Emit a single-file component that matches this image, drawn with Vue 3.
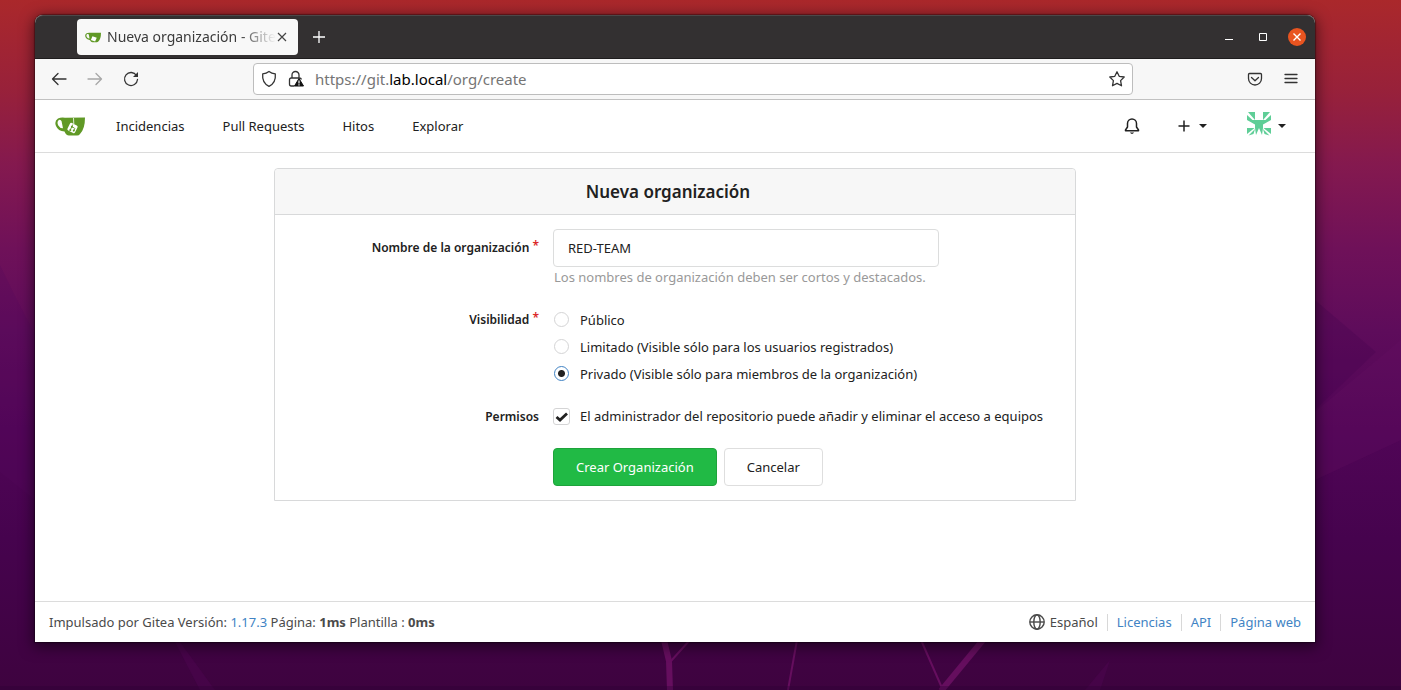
<script setup>
import { ref } from 'vue'

const navLinks = ['Incidencias', 'Pull Requests', 'Hitos', 'Explorar']
const footerLinks = ['Licencias', 'API', 'Página web']
const orgName = ref('RED-TEAM')
const visibility = ref('private')
const adminAccess = ref(true)
const visibilityOptions = [
  { value: 'public', label: 'Público' },
  { value: 'limited', label: 'Limitado (Visible sólo para los usuarios registrados)' },
  { value: 'private', label: 'Privado (Visible sólo para miembros de la organización)' },
]
</script>

<template>
  <div class="desktop">
    <svg class="wallpaper" viewBox="0 0 1401 690" preserveAspectRatio="none" aria-hidden="true">
      <path d="M0 265L14 294L35 335V500L0 472Z" fill="#52065a" opacity=".25" />
      <path d="M1315 300L1376 352L1315 410Z" fill="#450450" opacity=".3" />
      <path d="M1401 340L1315 412V480L1401 440Z" fill="#6b1065" opacity=".22" />
      <path d="M175 642L200 690H215L180 642ZM1110 660L1085 690H1100Z" fill="#5a0860" opacity=".25" />
      <g stroke="#650e5e" fill="none">
        <path d="M664 640L669 661L670 690" stroke-width="6" />
        <path d="M671 661L689 641M797 640L788 690M921 640L942 688" stroke-width="2" />
        <path d="M983 640L941 691" stroke-width="6" />
      </g>
      <path d="M0 688H1401" stroke="#2c0234" stroke-width="4" opacity=".35" />
    </svg>

    <div class="window">
      <header class="titlebar">
        <div class="tab">
          <svg class="favicon" viewBox="0 0 30 19" aria-hidden="true">
            <path d="M3 1.500Q6 0 10 .7L30 .5Q30 12 25 17Q24 18.500 22 18.500H14Q11 18.500 9.500 14.500Q3 14 1 9Q-1 4 3 1.500ZM4 3Q1.500 5 3.500 8.500Q5 11.500 8.500 11.500L7 3.500Q5 2.500 4 3Z" fill="#609926" fill-rule="evenodd" />
            <path d="M14 7L22 10L19 17L11 14Z" fill="#fff" />
          </svg>
          <span class="tab-title">Nueva organización - Gitea</span>
          <button class="plain tab-close" aria-label="Cerrar pestaña">
            <svg width="10" height="10" viewBox="0 0 10 10"><path d="M1 1L9 9M9 1L1 9" stroke="#444" stroke-width="1.200" /></svg>
          </button>
        </div>
        <button class="plain new-tab" aria-label="Nueva pestaña">
          <svg width="12" height="12" viewBox="0 0 12 12"><path d="M6 0V12M0 6H12" stroke="#fff" stroke-width="1.300" /></svg>
        </button>
        <div class="window-controls">
          <button class="plain" aria-label="Minimizar">
            <svg width="18" height="18" viewBox="0 0 18 18"><path d="M5 11.500H13" stroke="#fff" /></svg>
          </button>
          <button class="plain" aria-label="Maximizar">
            <svg width="18" height="18" viewBox="0 0 18 18"><path d="M5.500 5.500H12.500V12.500H5.500Z" stroke="#fff" fill="none" /></svg>
          </button>
          <button class="plain" aria-label="Cerrar">
            <svg width="18" height="18" viewBox="0 0 18 18"><circle cx="9" cy="9" r="9" fill="#e95420" /><path d="M5.500 5.500L12.500 12.500M12.500 5.500L5.500 12.500" stroke="#fff" stroke-width="1.400" /></svg>
          </button>
        </div>
      </header>

      <div class="toolbar">
        <div class="history">
          <button class="plain" aria-label="Atrás">
            <svg width="16" height="16" viewBox="0 0 16 16"><path d="M15 8H1.500M7 2.500L1.500 8L7 13.500" class="line" /></svg>
          </button>
          <button class="plain dim" aria-label="Adelante">
            <svg width="16" height="16" viewBox="0 0 16 16"><path d="M1 8H14.500M9 2.500L14.500 8L9 13.500" class="line" /></svg>
          </button>
          <button class="plain" aria-label="Recargar">
            <svg width="16" height="16" viewBox="0 0 16 16"><path d="M13.500 4.500A6.500 6.500 0 1 0 14.500 8.500" class="line" /><path d="M15 1V6H10Z" fill="#333" /></svg>
          </button>
        </div>
        <div class="address">
          <svg width="16" height="18" viewBox="0 0 16 18" aria-hidden="true"><path d="M8 1.500C6 3 4 3.600 1.700 3.900C1.200 9 3 14 8 16.300C13 14 14.800 9 14.300 3.900C12 3.600 10 3 8 1.500Z" class="line" /></svg>
          <svg width="16" height="18" viewBox="0 0 16 18" aria-hidden="true"><path d="M4 8V5A3.500 3.500 0 0 1 11 5V8M6 16H3.200Q1.500 16 1.500 14.300V9.700Q1.500 8 3.200 8H11.500Q13 8 13.200 9" class="line" /><path d="M11 8.500L15.500 16H6.500Z" fill="#111" stroke="#111" stroke-linejoin="round" /><path d="M11 10.500V13.500M11 14.300V15.500" stroke="#fff" stroke-width="1.200" /></svg>
          <div class="url">https://git.<b>lab.local</b>/org/create</div>
          <button class="plain" aria-label="Añadir a marcadores">
            <svg width="16" height="16" viewBox="0 0 16 16"><path d="M8 .8L10.200 5.300L15.200 6L11.600 9.600L12.500 14.800L8 12.400L3.500 14.800L4.400 9.600L.8 6L5.800 5.300Z" class="line" /></svg>
          </button>
        </div>
        <div class="tools">
          <button class="plain" aria-label="Guardar en Pocket">
            <svg width="16" height="16" viewBox="0 0 16 16"><path d="M2.500 2.500H13.500Q14.500 2.500 14.500 3.500V7.500A6.500 6.500 0 0 1 1.500 7.500V3.500Q1.500 2.500 2.500 2.500ZM4.500 6.500L8 9.800L11.500 6.500" class="line" /></svg>
          </button>
          <button class="plain" aria-label="Menú">
            <svg width="14" height="16" viewBox="0 0 14 16"><path d="M1 3.500H13M1 7.500H13M1 11.500H13" class="line" /></svg>
          </button>
        </div>
      </div>

      <nav class="site-nav">
        <a href="#" class="brand" aria-label="Inicio">
          <svg width="30" height="22" viewBox="0 -2 30 22">
            <path d="M3 1.500Q6 0 10 .7L30 .5Q30 12 25 17Q24 18.500 22 18.500H14Q11 18.500 9.500 14.500Q3 14 1 9Q-1 4 3 1.500ZM3.800 3Q1.500 5 3.300 8.500Q4.800 11.300 8 11.300L6.500 4Q5 2.300 3.800 3Z" fill="#609926" fill-rule="evenodd" />
            <path d="M18.500 1L18.800 7" stroke="#fff" fill="none" stroke-width=".8" />
            <rect x="13.300" y="6.800" width="8.400" height="8.400" rx="1.500" fill="#fff" transform="rotate(26 17.500 11)" />
            <path d="M17.800 7.500L14.900 13.800M16.800 9.800L19.400 11Q20 11.300 19.600 12.100L18.500 14.300" stroke="#609926" stroke-width=".9" fill="none" />
            <circle cx="16.900" cy="9.700" r="1" fill="#609926" /><circle cx="15.300" cy="13" r="1" fill="#609926" /><circle cx="18.800" cy="13.600" r="1" fill="#609926" />
          </svg>
        </a>
        <a v-for="link in navLinks" :key="link" href="#" class="nav-link">{{ link }}</a>
        <div class="nav-right">
          <button class="plain" aria-label="Notificaciones">
            <svg width="16" height="18" viewBox="0 0 16 18"><path d="M3.500 10V6.500A4.500 4.500 0 0 1 12.500 6.500V10L14.500 13V13.700H1.500V13Z" fill="none" stroke="#212121" stroke-width="1.500" stroke-linejoin="round" /><path d="M5.800 15.500H10.200Q8 18.300 5.800 15.500Z" fill="#212121" /></svg>
          </button>
          <button class="plain menu" aria-label="Crear">
            <svg width="12" height="12" viewBox="0 0 12 12"><path d="M6 .5V11.500M.5 6H11.500" stroke="#212121" stroke-width="1.500" /></svg>
            <svg width="8" height="4" viewBox="0 0 8 4"><path d="M0 0H8L4 4Z" fill="#212121" /></svg>
          </button>
          <button class="plain menu user" aria-label="Perfil">
            <svg width="24" height="28" viewBox="0 0 24 28"><path fill="#5fce97" d="M1 0H8V8ZM23 0H16V8ZM0 3L5.500 8H0ZM24 3L18.500 8H24ZM0 8H24L16 12.500V16L15 23L12 16L9 23L8 16V12.500ZM0 16H7.500L0 22ZM24 16H16.500L24 22ZM1.500 23.500L8 17L6.500 22ZM22.500 23.500L16 17L17.500 22Z" /></svg>
            <svg width="8" height="4" viewBox="0 0 8 4"><path d="M0 0H8L4 4Z" fill="#212121" /></svg>
          </button>
        </div>
      </nav>

      <main class="content">
        <form class="card" @submit.prevent>
          <h1 class="card-title">Nueva organización</h1>
          <div class="fields">
            <div class="row">
              <label class="label name-label" for="org-name">Nombre de la organización <span class="star">*</span></label>
              <div class="control">
                <input id="org-name" v-model="orgName" class="text-input" type="text" required />
                <p class="help">Los nombres de organización deben ser cortos y destacados.</p>
              </div>
            </div>
            <div class="row" role="radiogroup" aria-labelledby="visibility-label">
              <span id="visibility-label" class="label">Visibilidad <span class="star">*</span></span>
              <div class="control">
                <label v-for="option in visibilityOptions" :key="option.value" class="choice">
                  <input v-model="visibility" class="radio" type="radio" name="visibility" :value="option.value" />
                  {{ option.label }}
                </label>
              </div>
            </div>
            <div class="row">
              <span class="label">Permisos</span>
              <label class="choice single control">
                <span class="check-wrap">
                  <input v-model="adminAccess" class="check" type="checkbox" />
                  <svg v-if="adminAccess" class="tick" viewBox="0 0 17 17" aria-hidden="true"><path d="M3.500 9L7 12L14 5.500" stroke="#212121" stroke-width="2.800" fill="none" /></svg>
                </span>
                El administrador del repositorio puede añadir y eliminar el acceso a equipos
              </label>
            </div>
            <div class="row">
              <span class="label"></span>
              <div class="actions">
                <button class="button primary" type="submit">Crear Organización</button>
                <button class="button" type="button">Cancelar</button>
              </div>
            </div>
          </div>
        </form>
      </main>

      <footer class="footer">
        <div>Impulsado por Gitea Versión: <a href="#">1.17.3</a> Página: <b>1ms</b> Plantilla : <b>0ms</b></div>
        <div class="footer-right">
          <button class="plain language">
            <svg width="16" height="16" viewBox="0 0 16 16" aria-hidden="true"><g fill="none" stroke="#4a4a4a" stroke-width="1.400"><circle cx="8" cy="8" r="7.200" /><ellipse cx="8" cy="8" rx="3.200" ry="7.200" /><path d="M1 8H15" /></g></svg>
            Español
          </button>
          <a v-for="link in footerLinks" :key="link" href="#">{{ link }}</a>
        </div>
      </footer>
    </div>
  </div>
</template>

<style>
body {
  margin: 0;
}
</style>

<style scoped>
* {
  box-sizing: border-box;
}
.desktop {
  position: relative;
  display: flex;
  min-height: 100vh;
  padding: 15px 86px 48px 35px;
  overflow: hidden;
  background: linear-gradient(#aa282b 0%, #98213a 13%, #84194f 24%, #6f1159 36%, #5e0c5b 48%, #510557 62%, #46034e 78%, #3e033f 100%);
  font-family: "Noto Sans", sans-serif;
  font-size: 13px;
  line-height: 20px;
  color: #212121;
}
.wallpaper {
  position: absolute;
  inset: 0;
  width: 100%;
  height: 100%;
}
.window {
  position: relative;
  display: flex;
  flex: 1;
  flex-direction: column;
  min-width: 0;
  background: #fff;
  border-radius: 8px 8px 0 0;
  box-shadow: 0 0 1px 1px rgba(0, 0, 0, .35), 0 3px 14px 2px rgba(0, 0, 0, .5);
}
.plain {
  display: flex;
  align-items: center;
  padding: 0;
  border: 0;
  background: none;
  color: inherit;
  font: inherit;
  cursor: pointer;
}
a {
  color: #4183c4;
  text-decoration: none;
}
.line {
  fill: none;
  stroke: #333;
  stroke-width: 1.3;
  stroke-linejoin: round;
  stroke-linecap: round;
}
.titlebar {
  display: flex;
  align-items: center;
  height: 44px;
  padding: 0 9px 0 42px;
  border-top: 1px solid #4b4849;
  border-bottom: 1px solid #1f1d1e;
  border-radius: 8px 8px 0 0;
  background: #333031;
}
.tab {
  display: flex;
  align-items: center;
  width: 221px;
  height: 36px;
  padding: 0 11px 0 8px;
  border-radius: 4px;
  background: #f8f8f8;
}
.favicon {
  flex: none;
  width: 16px;
  height: 11px;
}
.tab-title {
  flex: 1;
  overflow: hidden;
  margin: 0 1px 0 6px;
  white-space: nowrap;
  font-size: 14px;
  color: #3b3b3b;
  mask-image: linear-gradient(to right, #000 78%, transparent);
}
.tab-close {
  flex: none;
}
.new-tab {
  margin-left: 15px;
}
.window-controls {
  display: flex;
  gap: 16px;
  margin-left: auto;
}
.toolbar {
  display: flex;
  align-items: center;
  height: 41px;
  padding: 0 17px 0 16px;
  border-bottom: 1px solid #c1c1c1;
  background: #f7f7f7;
}
.history {
  display: flex;
  flex: 1;
  gap: 20px;
}
.dim {
  opacity: .4;
}
.address {
  display: flex;
  flex: 0 1 880px;
  align-items: center;
  gap: 11px;
  height: 32px;
  padding: 0 7px;
  border: 1px solid #bdbdbd;
  border-radius: 4px;
  background: #fff;
}
.url {
  flex: 1;
  font-size: 15px;
  color: #757575;
}
.url b {
  font-weight: 400;
  color: #000;
}
.tools {
  display: flex;
  flex: 0 1 165px;
  justify-content: flex-end;
  gap: 21px;
}
.site-nav {
  display: flex;
  align-items: center;
  gap: 38px;
  height: 53px;
  padding: 0 29px 0 20px;
  border-bottom: 1px solid #dcdcdc;
}
.brand {
  display: flex;
  margin-right: -7px;
}
.nav-link {
  color: #212121;
}
.nav-right {
  display: flex;
  align-items: center;
  margin-left: auto;
}
.menu {
  gap: 9px;
  margin-left: 38px;
}
.user {
  margin-left: 40px;
  gap: 7px;
}
.content {
  flex: 1;
  padding: 15px 14px 60px;
}
.card {
  max-width: 802px;
  margin: 0 auto;
  border: 1px solid #d8d9da;
  border-radius: 4px 4px 0 0;
}
.card-title {
  margin: 0;
  padding: 10px 28px 10px 14px;
  border-bottom: 1px solid #d8d9da;
  border-radius: 4px 4px 0 0;
  background: #f7f7f7;
  font-size: 17px;
  font-weight: 600;
  line-height: 25px;
  text-align: center;
}
.fields {
  display: flex;
  flex-direction: column;
  gap: 18px;
  padding: 14px 0;
}
.row {
  display: flex;
  gap: 14px;
}
.label {
  flex: 0 0 33%;
  padding-top: 2px;
  text-align: right;
  font-size: 12px;
  font-weight: 600;
}
.name-label {
  padding-top: 7px;
}
.star {
  color: #db2828;
  vertical-align: 2px;
}
.control {
  flex: 1;
}
.text-input {
  display: block;
  width: 386px;
  max-width: 100%;
  height: 38px;
  padding: 0 14px;
  border: 1px solid #dcdddd;
  border-radius: 4px;
  background: #fff;
  color: #212121;
  font: inherit;
}
.help {
  margin: 0;
  padding-left: 1px;
  line-height: 21px;
  color: #999;
}
.choice {
  display: flex;
  align-items: center;
  gap: 10px;
  min-height: 27px;
}
.single {
  min-height: 22px;
}
.radio,
.check {
  display: block;
  flex: none;
  margin: 0;
  appearance: none;
  border: 1px solid #d4d4d5;
  background: #fff;
}
.radio {
  width: 15px;
  height: 15px;
  margin: 0 1px;
  border-radius: 50%;
}
.radio:checked {
  border-color: #4183c4;
  background: radial-gradient(circle, #212121 3px, #fff 4px);
}
.check-wrap {
  position: relative;
}
.check {
  width: 17px;
  height: 17px;
  border-radius: 3px;
}
.tick {
  position: absolute;
  inset: 0;
  pointer-events: none;
}
.actions {
  display: flex;
  gap: 7px;
  padding-top: 3px;
}
.button {
  height: 38px;
  padding: 0 22px;
  border: 1px solid #dedede;
  border-radius: 4px;
  background: #fff;
  color: #212121;
  font: inherit;
}
.primary {
  border-color: #1ea33b;
  background: #21ba45;
  color: #fff;
}
.footer {
  display: flex;
  align-items: center;
  justify-content: space-between;
  min-height: 41px;
  padding: 0 14px;
  border-top: 1px solid #dcdcdc;
  color: #4a4a4a;
}
.footer-right {
  display: flex;
}
.footer-right a {
  margin-left: 9px;
  padding-left: 9px;
  border-left: 1px solid #d8d8d8;
  line-height: 17px;
}
.language {
  gap: 5px;
  line-height: 17px;
}
</style>
